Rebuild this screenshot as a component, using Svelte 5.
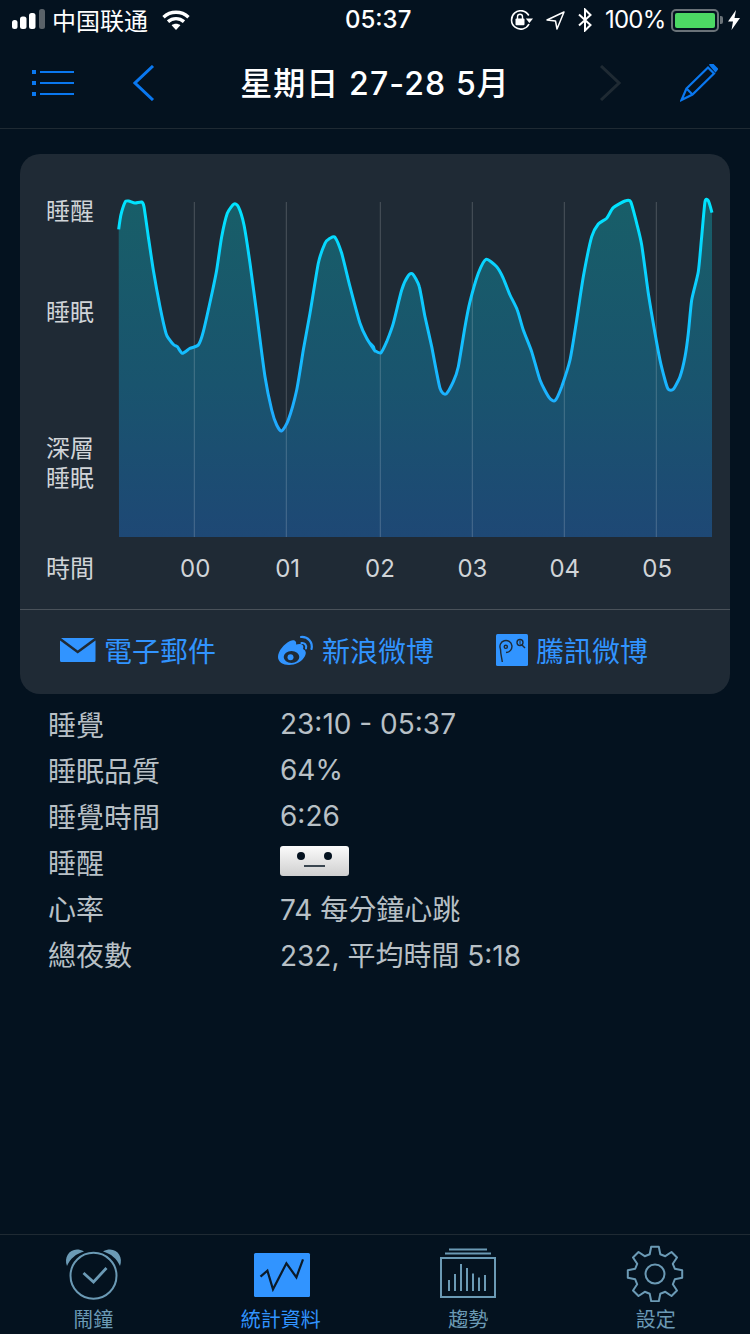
<script lang="ts">
	// curve samples traced from the night's graph, [x, y] in chart px * 3
	const left = [
		[296, 238], [300, 210], [305, 185], [316, 155], [326, 153], [345, 159], [365, 156], [372, 170], [385, 260], [400, 360],
		[420, 470], [438, 550], [448, 568], [462, 585], [472, 590], [487, 610], [510, 595], [535, 585], [550, 545], [578, 420],
		[590, 360], [605, 260], [622, 190], [642, 162], [655, 170], [672, 225], [690, 340], [710, 490], [735, 680], [755, 780],
		[770, 825], [785, 843], [805, 810], [830, 720], [850, 600], [870, 490], [895, 340], [915, 280], [930, 265], [945, 262],
		[965, 310], [990, 410], [1020, 520], [1040, 565], [1065, 603]
	];
	const right = [
		[0, 580], [10, 590], [15, 602], [33, 608], [50, 575], [70, 520], [95, 420], [115, 377], [128, 372], [148, 410],
		[165, 500], [185, 590], [210, 715], [228, 732], [250, 695], [265, 650], [285, 530], [300, 455], [325, 370],
		[348, 328], [380, 350], [400, 385], [420, 435], [442, 480], [460, 540], [485, 605], [510, 690], [537, 742],
		[555, 752], [575, 710], [600, 630], [620, 510], [640, 380], [665, 260], [685, 222], [710, 205], [730, 173],
		[765, 153], [782, 155], [800, 220], [815, 285], [835, 430], [855, 550], [870, 630], [885, 690], [895, 718], [910, 718],
		[930, 680], [945, 620], [955, 550], [965, 450], [985, 365], [995, 260], [1005, 155], [1015, 152], [1026, 188]
	];

	// both lists are zoomed crops, bring them back to chart coordinates (chart starts at 119,202)
	const points = [
		...left.map(([x, y]) => [x / 3 + 20 - 119, y / 3 + 150 - 202]),
		...right.map(([x, y]) => [x / 3 + 370 - 119, y / 3 + 150 - 202])
	];

	function smooth(pts: number[][]) {
		let d = `M${pts[0][0].toFixed(1)} ${pts[0][1].toFixed(1)}`;
		for (let i = 0; i < pts.length - 1; i++) {
			const a = pts[Math.max(i - 1, 0)];
			const b = pts[i];
			const c = pts[i + 1];
			const e = pts[Math.min(i + 2, pts.length - 1)];
			const c1 = [b[0] + (c[0] - a[0]) / 9, b[1] + (c[1] - a[1]) / 9];
			const c2 = [c[0] - (e[0] - b[0]) / 9, c[1] - (e[1] - b[1]) / 9];
			d += `C${c1[0].toFixed(1)} ${c1[1].toFixed(1)} ${c2[0].toFixed(1)} ${c2[1].toFixed(1)} ${c[0].toFixed(1)} ${c[1].toFixed(1)}`;
		}
		return d;
	}

	const chartW = 593;
	const chartH = 335;
	const line = smooth(points);
	const area = `${line}L${chartW} ${chartH}L0 ${chartH}Z`;
	const gridX = [75.3, 167.3, 261.3, 353.3, 445.3, 537.3];
	const hours = ['00', '01', '02', '03', '04', '05'];

	const stats = [
		{ label: '睡覺', value: '23:10 - 05:37' },
		{ label: '睡眠品質', value: '64%' },
		{ label: '睡覺時間', value: '6:26' },
		{ label: '睡醒', value: '', face: true },
		{ label: '心率', value: '74 每分鐘心跳' },
		{ label: '總夜數', value: '232, 平均時間 5:18' }
	];

	// gear outline for the settings tab
	function gear(cx: number, cy: number) {
		const out: string[] = [];
		const polar = (r: number, deg: number) => {
			const t = (deg * Math.PI) / 180;
			return `${(cx + r * Math.cos(t)).toFixed(1)} ${(cy + r * Math.sin(t)).toFixed(1)}`;
		};
		for (let i = 0; i < 8; i++) {
			const a = -90 + i * 45;
			out.push(polar(20.5, a - 15), polar(27.5, a - 8), polar(27.5, a + 8), polar(20.5, a + 15));
		}
		return `M${out.join('L')}Z`;
	}
</script>

<div class="screen">
	<div class="status">
		<svg class="signal" width="34" height="22" viewBox="0 0 34 22">
			<rect x="0" y="11" width="5.5" height="9" rx="2.5" fill="#fff" />
			<rect x="8" y="7.5" width="6.5" height="12.5" rx="2.5" fill="#fff" />
			<rect x="17" y="4" width="6.5" height="16" rx="2.5" fill="#fff" />
			<rect x="27" y="0" width="6" height="20" rx="2.5" fill="#5a6269" />
		</svg>
		<span class="carrier">中国联通</span>
		<svg class="wifi" width="28" height="20" viewBox="0 0 28 20" fill="none" stroke="#fff" stroke-width="3.4">
			<path d="M1.5 7.2C8.5 0.6 19.5 0.6 26.5 7.2" />
			<path d="M6 11.6C10.6 7.6 17.4 7.6 22 11.6" />
			<path d="M14 20L9.6 15.2C12 13.2 16 13.2 18.4 15.2Z" fill="#fff" stroke="none" />
		</svg>
		<span class="time">05:37</span>
		<div class="status-right">
			<svg class="rotlock" width="24" height="20" viewBox="0 0 24 20" fill="none" stroke="#fff" stroke-width="1.6">
				<path d="M19 14A9.2 9.2 0 1 1 18.8 5.500" />
				<path d="M15.800 8.500L23 8.500L19.400 13Z" fill="#fff" stroke="none" />
				<rect x="5.500" y="8.400" width="9" height="6.800" rx="1" fill="#fff" stroke="none" />
				<path d="M7.500 9V6.800A2.500 2.500 0 0 1 12.500 6.800V9" stroke-width="1.400" />
			</svg>
			<svg class="gps" width="19" height="19" viewBox="0 0 19 19" fill="none" stroke="#fff" stroke-width="1.5" stroke-linejoin="round">
				<path d="M18 1L1 9L9.5 10L11 18Z" />
			</svg>
			<svg class="bt" width="14" height="24" viewBox="0 0 14 24" fill="none" stroke="#fff" stroke-width="2">
				<path d="M1 6.5L12.5 17L7 22.5V1.5L12.5 7L1 17.5" />
			</svg>
			<span class="pct">100%</span>
			<div class="battery"><div class="charge"></div></div>
			<div class="nub"></div>
			<svg class="bolt" width="12" height="20" viewBox="0 0 12 20">
				<path d="M8 0L0 11.5H5L3.5 20L12 8H6.5Z" fill="#fff" />
			</svg>
		</div>
	</div>

	<div class="nav">
		<svg class="nav-icon menu" width="44" height="28" viewBox="0 0 44 28" fill="#0a78f0">
			<rect x="0" y="0" width="4" height="4" /><rect x="0" y="11" width="4" height="4" /><rect x="0" y="22" width="4" height="4" />
			<rect x="8" y="1" width="34" height="2" /><rect x="8" y="12" width="34" height="2" /><rect x="8" y="23" width="34" height="2" />
		</svg>
		<svg class="nav-icon back" width="22" height="36" viewBox="0 0 22 36" fill="none" stroke="#0a78f0" stroke-width="3">
			<path d="M20 1L2 18L20 35" />
		</svg>
		<h1>星期日 27-28 5月</h1>
		<svg class="nav-icon next" width="22" height="36" viewBox="0 0 22 36" fill="none" stroke="#1f2a33" stroke-width="3">
			<path d="M2 1L20 18L2 35" />
		</svg>
		<svg class="nav-icon pencil" width="38" height="38" viewBox="0 0 38 38" fill="none" stroke="#0a78f0" stroke-width="2.2">
			<path d="M6.5 24.5L28 3.5L34 9.5L12.5 30.5L1.5 36Z" stroke-linejoin="miter" />
			<path d="M6.5 24.5L12.5 30.5" />
			<path d="M30.5 1L32 0L37 5L35.5 7Z" fill="#0a78f0" />
		</svg>
	</div>

	<div class="card">
		<div class="plot">
			<div class="ylabels">
				<span class="wake">睡醒</span>
				<span class="light">睡眠</span>
				<span class="deep">深層<br />睡眠</span>
			</div>
			<svg class="chart" width={chartW} height={chartH} viewBox="0 0 {chartW} {chartH}">
				<defs>
					<linearGradient id="areaFill" x1="0" y1="0" x2="0" y2="1">
						<stop offset="0" stop-color="#185e68" />
						<stop offset="0.55" stop-color="#19546e" />
						<stop offset="1" stop-color="#1e4875" />
					</linearGradient>
					<linearGradient id="lineStroke" gradientUnits="userSpaceOnUse" x1="0" y1="0" x2="0" y2="230">
						<stop offset="0" stop-color="#00e4ff" />
						<stop offset="1" stop-color="#20a8ff" />
					</linearGradient>
				</defs>
				<path d={area} fill="url(#areaFill)" />
				{#each gridX as x}
					<line x1={x} x2={x} y1="0" y2={chartH} stroke="#fff" stroke-opacity="0.2" />
				{/each}
				<path d={line} fill="none" stroke="url(#lineStroke)" stroke-width="3" stroke-linejoin="round" />
			</svg>
		</div>

		<div class="axis">
			<span class="axis-title">時間</span>
			<div class="ticks">
				{#each hours as h}
					<span>{h}</span>
				{/each}
			</div>
		</div>

		<div class="share">
			<div class="share-item">
				<svg width="36" height="24" viewBox="0 0 37 24" preserveAspectRatio="none">
					<path d="M1 0H35.5L18.2 12.5Z" fill="#3194ff" />
					<path d="M0 2.5L18.2 15.5L36.5 2.5V22.5Q36.5 24 35 24H1.5Q0 24 0 22.5Z" fill="#3194ff" />
				</svg>
				<span>電子郵件</span>
			</div>
			<div class="share-item">
				<svg width="36" height="30" viewBox="0 0 36 30">
					<path d="M12 6C16 4 19 6 18 9.5C23 8 26.5 9.5 25 14C27 15 29 17 27 21C24 27 17 30 11 30C5 30 0 27 0 22C0 16 6 9 12 6Z" fill="#3194ff" />
					<ellipse cx="13.5" cy="22" rx="7.8" ry="6" fill="#1f2a35" />
					<circle cx="12.5" cy="22.3" r="3" fill="#3194ff" />
					<path d="M23 2C30 1.5 35 7 33.5 14" fill="none" stroke="#3194ff" stroke-width="2.2" stroke-linecap="round" />
					<path d="M23.5 8C26.5 7.5 29 10 28 13.500" fill="none" stroke="#3194ff" stroke-width="2" stroke-linecap="round" />
				</svg>
				<span>新浪微博</span>
			</div>
			<div class="share-item">
				<svg width="32" height="32" viewBox="0 0 32 32">
					<rect width="32" height="32" rx="1.500" fill="#3194ff" />
					<g fill="none" stroke="#1f2a35" stroke-width="1.400">
						<path d="M4.500 15A6 6 0 1 1 10 18.500" />
						<path d="M4.500 15C4.500 20 6 25 6.300 28" />
						<circle cx="9.800" cy="12.800" r="1.600" />
						<circle cx="24" cy="8.500" r="3" />
						<path d="M24 6.500V9.500L25.500 11" stroke-width="1" />
						<path d="M26 11L29 14" />
					</g>
				</svg>
				<span>騰訊微博</span>
			</div>
		</div>
	</div>

	<div class="stats">
		{#each stats as row}
			<div class="row">
				<span>{row.label}</span>
				{#if row.face}
					<div class="face">
						<div class="eyes"><i></i><i></i></div>
						<div class="mouth"></div>
					</div>
				{:else}
					<span>{row.value}</span>
				{/if}
			</div>
		{/each}
	</div>

	<div class="tabs">
		<div class="tab">
			<svg width="64" height="58" viewBox="0 0 64 58" fill="none" stroke="#6b9ab5" stroke-width="2">
				<circle cx="31.500" cy="31.700" r="23" />
				<path d="M5 22C1 12 10 1 22 7.500C14 9.500 8 15 5 22Z" fill="#6b9ab5" stroke="none" />
				<path d="M58 22C62 12 53 1 41 7.500C49 9.500 55 15 58 22Z" fill="#6b9ab5" stroke="none" />
				<path d="M21.500 29L31.500 38L44.500 24" stroke-width="2.800" />
			</svg>
			<span>鬧鐘</span>
		</div>
		<div class="tab active">
			<svg width="64" height="58" viewBox="0 0 64 58">
				<rect x="5" y="9" width="56" height="44" rx="1.500" fill="#3194ff" />
				<path d="M11.500 32.700L18.400 26.700L24 45.300L37.400 19.300L47.400 33.300L54 15.300" fill="none" stroke="#0b1a28" stroke-width="2.200" />
			</svg>
			<span>統計資料</span>
		</div>
		<div class="tab">
			<svg width="64" height="58" viewBox="0 0 64 58" fill="none" stroke="#6b9ab5">
				<rect x="4" y="14" width="54" height="39" stroke-width="2" />
				<path d="M12 5.500H50M8 9.500H54" stroke-width="2" />
				<path d="M12 47V36M18 47V30M24 47V20M30 47V24M36 47V29.500M42 47V33.500M48 47V31" stroke-width="2" />
			</svg>
			<span>趨勢</span>
		</div>
		<div class="tab">
			<svg width="64" height="58" viewBox="0 0 64 58" fill="none" stroke="#6b9ab5" stroke-width="2" stroke-linejoin="round">
				<path d={gear(31, 30)} />
				<circle cx="31" cy="30" r="9.500" />
			</svg>
			<span>設定</span>
		</div>
	</div>
</div>

<style>
	:global(body) {
		margin: 0;
		background: #04121f;
	}

	.screen {
		display: flex;
		flex-direction: column;
		width: 750px;
		height: 1334px;
		overflow: hidden;
		background: #04121f;
		font-family: Inter, 'Noto Sans CJK TC', sans-serif;
		color: #fff;
	}

	/* status bar */
	.status {
		position: relative;
		display: flex;
		align-items: center;
		height: 40px;
		padding: 0 10px 0 12px;
		font-size: 24px;
		line-height: 40px;
		flex-shrink: 0;
	}

	.carrier {
		margin-left: 6px;
		font-family: 'Noto Sans CJK SC', sans-serif;
	}

	.wifi {
		margin-left: 14px;
	}

	.time {
		position: absolute;
		left: 345px;
		font-weight: 500;
	}

	.status-right {
		display: flex;
		align-items: center;
		margin-left: auto;
	}

	.gps {
		margin-left: 12px;
	}

	.bt {
		margin-left: 13px;
	}

	.pct {
		margin-left: 13px;
		width: 60px;
		white-space: nowrap;
		letter-spacing: -0.8px;
	}

	.battery {
		box-sizing: border-box;
		width: 48px;
		height: 23px;
		margin-left: 6px;
		padding: 2px;
		border: 2px solid #6a7278;
		border-radius: 5px;
	}

	.charge {
		height: 100%;
		background: #4cd964;
		border-radius: 2px;
	}

	.nub {
		width: 3px;
		height: 8px;
		margin-left: 1px;
		background: #6a7278;
		border-radius: 0 2px 2px 0;
	}

	.bolt {
		margin-left: 5px;
	}

	/* nav */
	.nav {
		position: relative;
		display: flex;
		align-items: center;
		justify-content: center;
		height: 88px;
		border-bottom: 1px solid #1f2a33;
		flex-shrink: 0;
	}

	.nav h1 {
		margin: 0;
		font-size: 32px;
		font-weight: 500;
		line-height: 44px;
		letter-spacing: 1.1px;
		white-space: nowrap;
	}

	.nav-icon {
		position: absolute;
	}

	.menu {
		left: 32px;
		top: 30px;
	}

	.back {
		left: 133px;
		top: 25px;
	}

	.next {
		left: 599px;
		top: 25px;
	}

	.pencil {
		left: 680px;
		top: 24px;
	}

	/* chart card */
	.card {
		margin: 25px 20px 0;
		height: 540px;
		flex-shrink: 0;
		background: #1f2a35;
		border-radius: 20px;
	}

	.plot {
		display: flex;
		padding: 48px 0 0 26px;
	}

	.ylabels {
		display: flex;
		flex-direction: column;
		width: 73px;
		font-size: 24px;
		line-height: 30px;
		color: #d0d4d8;
	}

	.wake {
		margin-top: -5px;
	}

	.light {
		margin-top: 71px;
	}

	.deep {
		margin-top: 106px;
	}

	.chart {
		display: block;
		overflow: visible;
		flex-shrink: 0;
	}

	.axis {
		display: flex;
		height: 73px;
		padding: 17px 0 0 26px;
		box-sizing: border-box;
		border-bottom: 1px solid #4a525a;
		font-size: 24px;
		line-height: 30px;
		color: #d0d4d8;
	}

	.axis-title {
		width: 103px;
	}

	.ticks {
		display: flex;
	}

	.ticks span {
		width: 92.4px;
		text-align: center;
	}

	.share {
		display: grid;
		grid-template-columns: repeat(3, 218px);
		padding-left: 40px;
		height: 83px;
		align-items: center;
		font-size: 28px;
		color: #3194ff;
	}

	.share-item {
		display: flex;
		align-items: center;
		gap: 8px;
		margin-top: -4px;
	}

	.share-item svg {
		flex-shrink: 0;
	}

	/* stats list */
	.stats {
		padding: 7px 0 0 48px;
		font-size: 28px;
		color: #b8c0c6;
	}

	.row {
		display: grid;
		grid-template-columns: 232px 1fr;
		align-items: center;
		height: 46px;
	}

	.face {
		box-sizing: border-box;
		width: 69px;
		height: 30px;
		margin-top: -2px;
		padding-top: 6px;
		border-radius: 3px;
		background: linear-gradient(#fbfbfb, #cfcfcf);
	}

	.eyes {
		display: flex;
		justify-content: space-between;
		padding: 0 17px;
	}

	.eyes i {
		width: 8px;
		height: 8px;
		border-radius: 50%;
		background: #04121f;
	}

	.mouth {
		width: 21px;
		height: 2px;
		margin: 5px auto 0;
		background: #3a4650;
	}

	/* tab bar */
	.tabs {
		display: grid;
		grid-template-columns: repeat(4, 1fr);
		height: 100px;
		margin-top: auto;
		box-sizing: border-box;
		padding-top: 9px;
		border-top: 1px solid #1f2a33;
		flex-shrink: 0;
	}

	.tab {
		display: flex;
		flex-direction: column;
		align-items: center;
		font-size: 20px;
		line-height: 24px;
		color: #6b9ab5;
	}

	.tab svg {
		display: block;
		margin-bottom: 6px;
	}

	.tab span {
		margin-left: -1px;
	}

	.tab.active {
		color: #3194ff;
	}
</style>
